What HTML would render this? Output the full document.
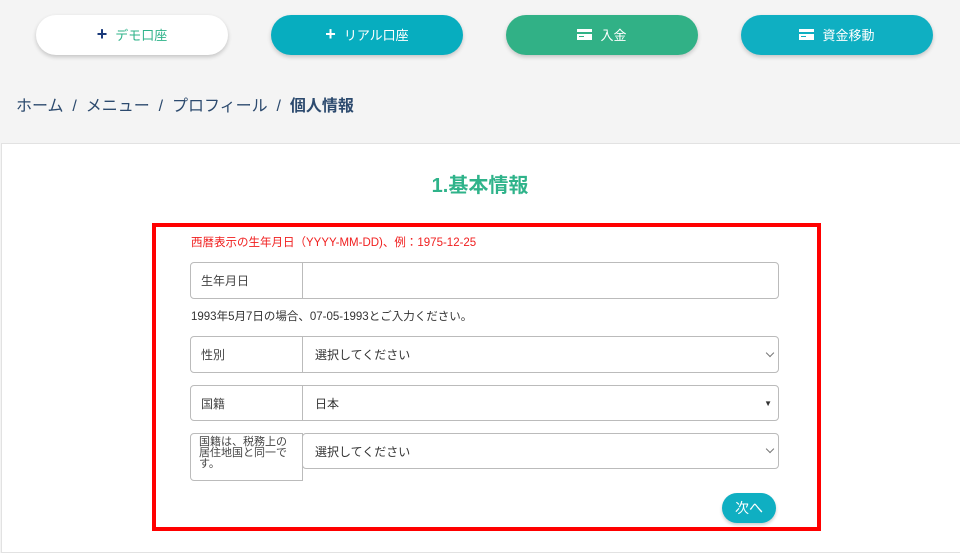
<!DOCTYPE html>
<html><head><meta charset="utf-8"><style>
*{box-sizing:border-box;margin:0;padding:0}
body{width:960px;height:540px;background:#f4f4f4;font-family:"Liberation Sans","Noto Sans CJK JP",sans-serif;position:relative;overflow:hidden}
.btn{position:absolute;top:15px;width:192px;height:40px;border-radius:20px;box-shadow:0 2px 4px rgba(0,0,0,.2);color:#fff;font-size:13px;display:flex;align-items:center;justify-content:center;gap:8px;padding-bottom:2px}
.ic{width:15px;height:11px;background:#fff;position:relative}
.ic:before{content:"";position:absolute;left:0;right:0;top:3px;height:2px;background:currentColor}
.ic:after{content:"";position:absolute;left:2px;top:7px;width:5px;height:1px;background:currentColor}
.bc{position:absolute;left:16px;top:92px;font-size:16px;color:#2c4a6e}
.card{position:absolute;left:1px;top:143px;width:960px;height:410px;background:#fff;border:1px solid #e2e2e2}
h1{position:absolute;left:0;width:960px;top:169px;text-align:center;font-size:20px;color:#2fb38a;font-weight:bold}
.red{position:absolute;left:152px;top:223px;width:669px;height:308px;border:4px solid #f00}
.abs{position:absolute}
.lab{position:absolute;border:1px solid #bbb;border-radius:4px 0 0 4px;font-size:12px;color:#444;padding:9px 10px;background:#fff}
.inp{position:absolute;border:1px solid #bbb;border-radius:0 4px 4px 0;font-size:12px;color:#333;padding:0 12px;display:flex;align-items:center;background:#fff}
.chev{position:absolute;right:5px;top:50%;width:6px;height:6px;margin-top:-5px;border-right:1px solid #777;border-bottom:1px solid #777;transform:rotate(45deg)}
</style></head><body>
<div class="btn" style="left:36px;background:#fff;color:#2fb38a"><span style="color:#1b3a7a;font-size:18px;font-weight:bold">+</span>デモ口座</div>
<div class="btn" style="left:271px;background:#07adbf"><span style="font-size:18px;font-weight:bold">+</span>リアル口座</div>
<div class="btn" style="left:506px;background:#31b186;color:#31b186"><span class="ic"></span><span style="color:#fff">入金</span></div>
<div class="btn" style="left:741px;background:#0fafc2;color:#0fafc2"><span class="ic"></span><span style="color:#fff">資金移動</span></div>
<div class="bc">ホーム &nbsp;/&nbsp; メニュー &nbsp;/&nbsp; プロフィール &nbsp;/&nbsp; <b>個人情報</b></div>
<div class="card"></div>
<h1>1.基本情報</h1>
<div class="red"></div>
<div class="abs" style="left:191px;top:234px;font-size:11.5px;color:#f02020">西暦表示の生年月日（YYYY-MM-DD)、例：1975-12-25</div>
<div class="lab" style="left:190px;top:262px;width:113px;height:37px">生年月日</div>
<div class="inp" style="left:302px;top:262px;width:477px;height:37px"></div>
<div class="abs" style="left:191px;top:308px;font-size:11.5px;color:#333">1993年5月7日の場合、07-05-1993とご入力ください。</div>
<div class="lab" style="left:190px;top:336px;width:113px;height:37px">性別</div>
<div class="inp" style="left:302px;top:336px;width:477px;height:37px">選択してください<span class="chev"></span></div>
<div class="lab" style="left:190px;top:385px;width:113px;height:36px">国籍</div>
<div class="inp" style="left:302px;top:385px;width:477px;height:36px">日本<span style="position:absolute;right:6px;font-size:8px;color:#333">▼</span></div>
<div class="lab" style="left:190px;top:433px;width:113px;height:48px;padding:3px 8px;font-size:11px;line-height:11px">国籍は、税務上の居住地国と同一です。</div>
<div class="inp" style="left:302px;top:433px;width:477px;height:36px;border-radius:4px">選択してください<span class="chev"></span></div>
<div class="abs" style="left:722px;top:493px;width:54px;height:30px;border-radius:15px;background:#0fafc2;color:#fff;font-size:14px;display:flex;align-items:center;justify-content:center;box-shadow:0 2px 3px rgba(0,0,0,.2)">次へ</div>
</body></html>
